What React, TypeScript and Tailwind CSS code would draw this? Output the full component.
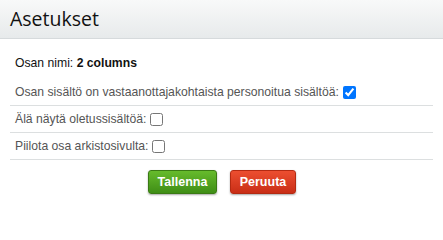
import React from "react";

export default function App() {
  const rowCls =
    "flex items-center h-[27px] pt-[1px] pl-[5px] border-b border-[#dcdfe0] text-[12.2px] text-[#555]";
  return (
    <div className="w-[443px] h-[205px] bg-white" style={{ fontFamily: "'Liberation Sans', Arial, sans-serif" }}>
      <div className="h-[39px] border-b border-[#d6dadc] bg-gradient-to-b from-[#f8f9f9] to-[#e7eaeb] flex items-center pl-[10px]">
        <span className="text-[19.5px] text-[#111]" style={{ fontFamily: "'Open Sans', sans-serif" }}>Asetukset</span>
      </div>
      <div className="px-[10px] pt-[11px]">
        <div className="flex items-center h-[26px] pl-[5px] text-[12.2px] text-[#111]">
          Osan nimi:&nbsp;<b>2 columns</b>
        </div>
        <div className="h-[3px]" />
        <div className={rowCls}>
          Osan sisältö on vastaanottajakohtaista personoitua sisältöä:
          <input type="checkbox" defaultChecked className="ml-[4px] w-[13px] h-[13px]" />
        </div>
        <div className={rowCls}>
          Älä näytä oletussisältöä:
          <input type="checkbox" className="ml-[4px] w-[13px] h-[13px]" />
        </div>
        <div className={rowCls}>
          Piilota osa arkistosivulta:
          <input type="checkbox" className="ml-[4px] w-[13px] h-[13px]" />
        </div>
        <div className="flex justify-center gap-[13px] mt-[10px] pl-[1px]">
          <button className="h-[24px] w-[69px] rounded-[3px] border border-[#3a7a14] bg-gradient-to-b from-[#66bb2c] to-[#3f8e16] text-white font-bold text-[12.5px] shadow-[0_1px_2px_rgba(0,0,0,0.35)]">
            Tallenna
          </button>
          <button className="h-[24px] w-[66px] rounded-[3px] border border-[#b32a12] bg-gradient-to-b from-[#ec4e30] to-[#c92e16] text-white font-bold text-[12.5px] shadow-[0_1px_2px_rgba(0,0,0,0.35)]">
            Peruuta
          </button>
        </div>
      </div>
    </div>
  );
}
